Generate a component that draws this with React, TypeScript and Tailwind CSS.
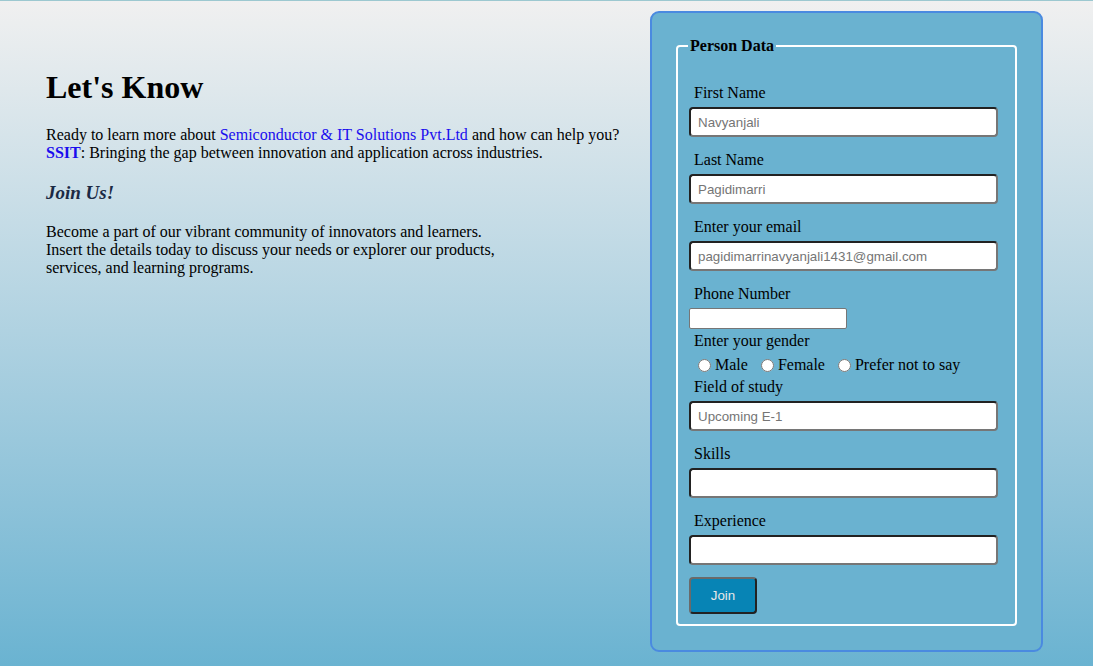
import React from "react";

const serif = { fontFamily: '"Liberation Serif", "Times New Roman", serif' };

function Field({ label, placeholder }: { label: string; placeholder?: string }) {
  return (
    <div className="flex flex-col">
      <label className="pl-[5px] text-[16px] leading-[18px] text-black">{label}</label>
      <input
        type="text"
        placeholder={placeholder}
        className="mt-[5px] h-[30px] w-[309px] rounded-[4px] border-2 border-t-[#222] border-l-[#222] border-b-[#767676] border-r-[#767676] bg-white px-[7px] text-[13.33px] text-black placeholder:text-[#757575] font-['Liberation_Sans',Arial,sans-serif]"
      />
    </div>
  );
}

export default function App() {
  return (
    <div
      className="min-h-[666px] w-full border-t border-[#9cc8d0] bg-gradient-to-b from-[#f0f0f0] to-[#6ab3d1] flex"
      style={serif}
    >
      <div className="w-[650px] shrink-0 pl-[46px]">
        <h1 className="mt-[68px] text-[32px] leading-[37px] font-bold text-black">Let's Know</h1>
        <p className="mt-[20px] text-[16px] leading-[18px] text-black">
          Ready to learn more about <a className="text-[#1a0dee]">Semiconductor &amp; IT Solutions Pvt.Ltd</a> and how can help you?
          <br />
          <b className="text-[#1a0dee]">SSIT</b>: Bringing the gap between innovation and application across industries.
        </p>
        <h3 className="mt-[20px] text-[19px] leading-[22px] font-bold italic text-[#1b2a45]">Join Us!</h3>
        <p className="mt-[19px] text-[16px] leading-[18px] text-black">
          Become a part of our vibrant community of innovators and learners.
          <br />
          Insert the details today to discuss your needs or explorer our products,
          <br />
          services, and learning programs.
        </p>
      </div>

      <div className="mt-[10px] h-[641px] w-[393px] shrink-0 rounded-[9px] border-2 border-[#4a8ae0] bg-[#6ab2d0] p-[24px]">
        <fieldset className="h-full rounded-[4px] border-2 border-white px-[11px] pb-[10px]">
          <legend className="-ml-[1px] px-[2px] text-[16px] leading-[18px] font-bold text-black">Person Data</legend>
          <div className="mt-[29px] flex flex-col">
            <Field label="First Name" placeholder="Navyanjali" />
            <div className="mt-[14px]">
              <Field label="Last Name" placeholder="Pagidimarri" />
            </div>
            <div className="mt-[14px]">
              <Field label="Enter your email" placeholder="pagidimarrinavyanjali1431@gmail.com" />
            </div>
            <label className="mt-[14px] pl-[5px] text-[16px] leading-[18px] text-black">Phone Number</label>
            <input
              type="tel"
              className="mt-[5px] h-[21px] w-[158px] rounded-[2px] border border-[#767676] bg-white"
            />
            <label className="mt-[3px] pl-[5px] text-[16px] leading-[18px] text-black">Enter your gender</label>
            <div className="mt-[6px] flex h-[18px] items-center pl-[9px] text-[16px] leading-[18px] text-black">
              <input type="radio" name="g" className="m-0 h-[13px] w-[13px]" />
              <span className="ml-[4px]">Male</span>
              <input type="radio" name="g" className="ml-[13px] h-[13px] w-[13px]" />
              <span className="ml-[4px]">Female</span>
              <input type="radio" name="g" className="ml-[13px] h-[13px] w-[13px]" />
              <span className="ml-[4px]">Prefer not to say</span>
            </div>
            <div className="mt-[4px]">
              <Field label="Field of study" placeholder="Upcoming E-1" />
            </div>
            <div className="mt-[14px]">
              <Field label="Skills" />
            </div>
            <div className="mt-[14px]">
              <Field label="Experience" />
            </div>
            <button
              type="button"
              className="mt-[12px] h-[37px] w-[68px] rounded-[4px] border-2 border-t-[#6a6a6a] border-l-[#6a6a6a] border-b-[#222] border-r-[#222] bg-[#0784b5] text-[13.33px] text-[#e8e8e8] font-['Liberation_Sans',Arial,sans-serif]"
            >
              Join
            </button>
          </div>
        </fieldset>
      </div>
    </div>
  );
}
